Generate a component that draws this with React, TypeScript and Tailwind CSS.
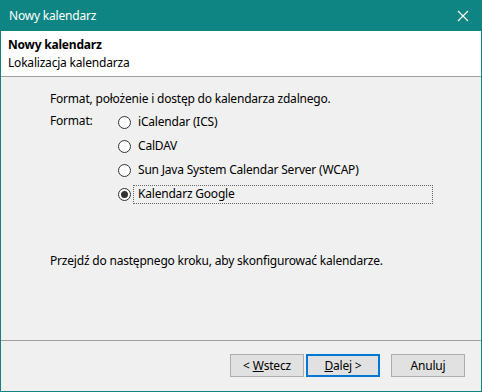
import React from "react";

const Radio = ({ checked, label, focus }: { checked?: boolean; label: string; focus?: boolean }) => (
  <div className="flex h-[24px] items-center">
    <div className="ml-[68px] flex h-[13px] w-[13px] items-center justify-center rounded-full border border-[#333333] bg-white">
      {checked && <div className="h-[7px] w-[7px] rounded-full bg-[#333333]" />}
    </div>
    {focus ? (
      <div className="ml-[2px] flex h-[19px] w-[300px] items-center border border-dotted border-[#666] pl-[4px]">{label}</div>
    ) : (
      <div className="ml-[7px]">{label}</div>
    )}
  </div>
);

export default function App() {
  return (
    <div
      className="flex h-[392px] w-[482px] flex-col border border-t-0 border-[#0e8583] bg-[#f0f0f0] text-[12px] tracking-[-0.2px] text-black"
      style={{ fontFamily: '"Noto Sans", sans-serif' }}
    >
      <div className="-mx-px flex h-[31px] shrink-0 items-center justify-between bg-[#0e8583] pl-[9px] pr-[13px] text-white">
        <span>Nowy kalendarz</span>
        <svg width="12" height="12" viewBox="0 0 12 12" stroke="white" strokeWidth="1.2">
          <path d="M1 1L11 11M11 1L1 11" />
        </svg>
      </div>
      <div className="flex h-[46px] shrink-0 flex-col border-b border-[#a0a0a0] bg-white pl-[7px] pt-[5px] leading-[18px]">
        <span className="font-bold">Nowy kalendarz</span>
        <span>Lokalizacja kalendarza</span>
      </div>
      <div className="flex flex-1 flex-col pl-[49px] pt-[13px]">
        <div className="leading-[18px]">Format, położenie i dostęp do kalendarza zdalnego.</div>
        <div className="relative mt-[2px]">
          <div className="absolute left-0 top-[2px]">Format:</div>
          <Radio label="iCalendar (ICS)" />
          <Radio label="CalDAV" />
          <Radio label="Sun Java System Calendar Server (WCAP)" />
          <Radio label="Kalendarz Google" checked focus />
        </div>
        <div className="mt-[46px] leading-[18px]">Przejdź do następnego kroku, aby skonfigurować kalendarze.</div>
      </div>
      <div className="flex h-[51px] shrink-0 items-start border-t border-[#a0a0a0] pl-[229px] pt-[13px]">
        <button className="flex h-[23px] w-[74px] items-center justify-center border border-[#adadad] bg-[#e1e1e1]">
          &lt;&nbsp;<span className="underline">W</span>stecz
        </button>
        <button className="ml-[2px] flex h-[23px] w-[74px] items-center justify-center border-2 border-[#0078d7] bg-[#e1e1e1]">
          <span className="underline">D</span>alej&nbsp;&gt;
        </button>
        <button className="ml-[11px] flex h-[23px] w-[74px] items-center justify-center border border-[#adadad] bg-[#e1e1e1]">
          Anuluj
        </button>
      </div>
    </div>
  );
}
